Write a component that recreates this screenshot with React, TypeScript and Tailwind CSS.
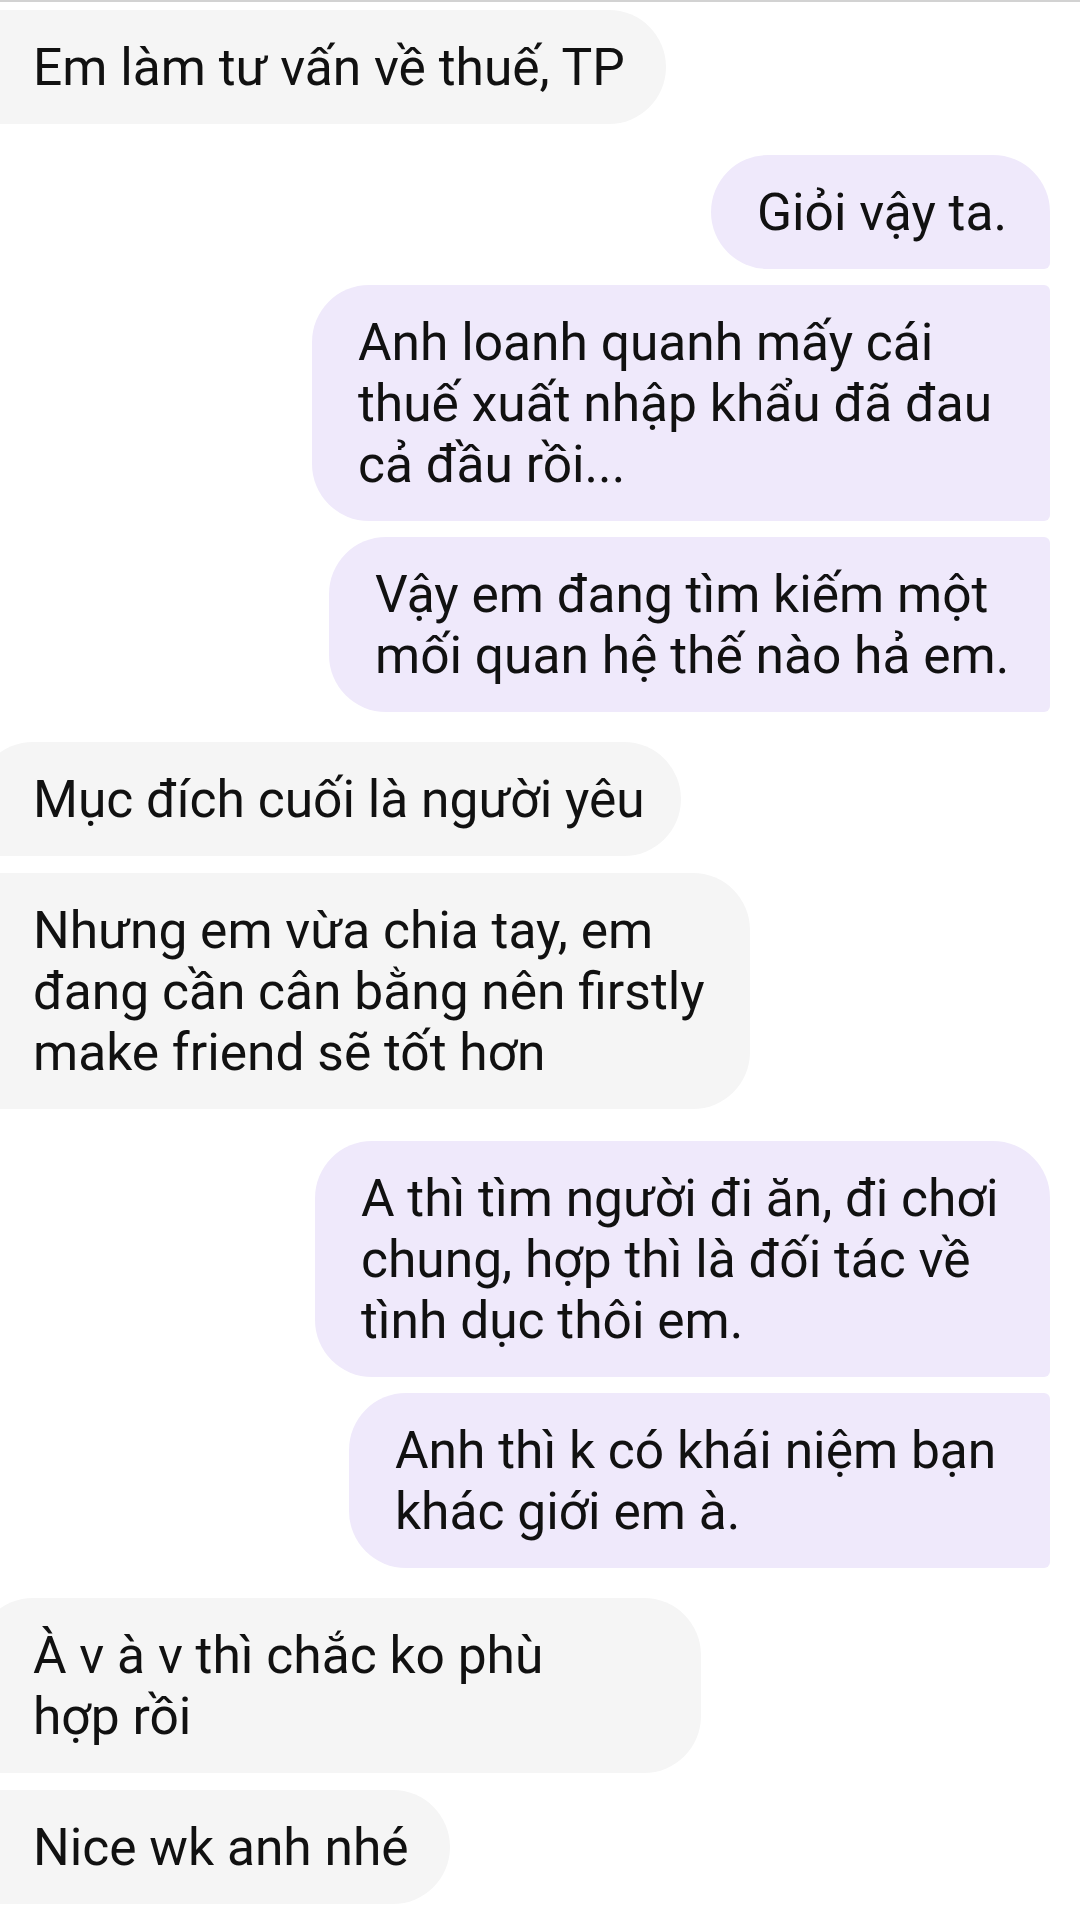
import React from "react";

type Msg = {
  from: "me" | "them";
  lines: string[];
  corners: string;
  gap: string;
  width: string;
};

const messages: Msg[] = [
  {
    from: "them",
    lines: ["Em làm tư vấn về thuế, TP"],
    corners: "rounded-l-[6px] rounded-r-[57px]",
    gap: "mt-[8px]",
    width: "w-[690px]",
  },
  {
    from: "me",
    lines: ["Giỏi vậy ta."],
    corners: "rounded-l-[57px] rounded-tr-[57px] rounded-br-[6px]",
    gap: "mt-[31px]",
    width: "w-[339px]",
  },
  {
    from: "me",
    lines: ["Anh loanh quanh mấy cái", "thuế xuất nhập khẩu đã đau", "cả đầu rồi..."],
    corners: "rounded-l-[57px] rounded-r-[6px]",
    gap: "mt-[16px]",
    width: "w-[738px]",
  },
  {
    from: "me",
    lines: ["Vậy em đang tìm kiếm một", "mối quan hệ thế nào hả em."],
    corners: "rounded-l-[57px] rounded-r-[6px]",
    gap: "mt-[16px]",
    width: "w-[721px]",
  },
  {
    from: "them",
    lines: ["Mục đích cuối là người yêu"],
    corners: "rounded-tl-[57px] rounded-bl-[6px] rounded-r-[57px]",
    gap: "mt-[30px]",
    width: "w-[705px]",
  },
  {
    from: "them",
    lines: ["Nhưng em vừa chia tay, em", "đang cần cân bằng nên firstly", "make friend sẽ tốt hơn"],
    corners: "rounded-l-[6px] rounded-r-[57px]",
    gap: "mt-[17px]",
    width: "w-[774px]",
  },
  {
    from: "me",
    lines: ["A thì tìm người đi ăn, đi chơi", "chung, hợp thì là đối tác về", "tình dục thôi em."],
    corners: "rounded-l-[57px] rounded-tr-[57px] rounded-br-[6px]",
    gap: "mt-[32px]",
    width: "w-[735px]",
  },
  {
    from: "me",
    lines: ["Anh thì k có khái niệm bạn", "khác giới em à."],
    corners: "rounded-l-[57px] rounded-r-[6px]",
    gap: "mt-[16px]",
    width: "w-[701px]",
  },
  {
    from: "them",
    lines: ["À v à v thì chắc ko phù", "hợp rồi"],
    corners: "rounded-tl-[57px] rounded-bl-[6px] rounded-r-[57px]",
    gap: "mt-[30px]",
    width: "w-[725px]",
  },
  {
    from: "them",
    lines: ["Nice wk anh nhé"],
    corners: "rounded-l-[6px] rounded-r-[57px]",
    gap: "mt-[17px]",
    width: "w-[474px]",
  },
];

function Bubble({ msg }: { msg: Msg }) {
  const mine = msg.from === "me";
  return (
    <div className={`flex ${mine ? "justify-end pr-[30px]" : "justify-start"} ${msg.gap}`}>
      <div
        className={`${msg.width} ${msg.corners} ${
          mine ? "bg-[#efe9fb] pl-[46px]" : "bg-[#f5f5f5] -ml-[24px] pl-[57px]"
        } shrink-0 py-[26.5px] text-[51.5px] leading-[61px] text-[#111111] whitespace-nowrap`}
      >
        {msg.lines.map((line, i) => (
          <div key={i}>{line}</div>
        ))}
      </div>
    </div>
  );
}

export default function App() {
  return (
    <div
      className="w-[1080px] h-[1912px] bg-white overflow-hidden"
      style={{ fontFamily: "Roboto, 'Noto Sans', sans-serif" }}
    >
      <div className="h-[2px] bg-[#d2d2d2]" />
      <div className="flex flex-col">
        {messages.map((m, i) => (
          <Bubble key={i} msg={m} />
        ))}
      </div>
    </div>
  );
}
